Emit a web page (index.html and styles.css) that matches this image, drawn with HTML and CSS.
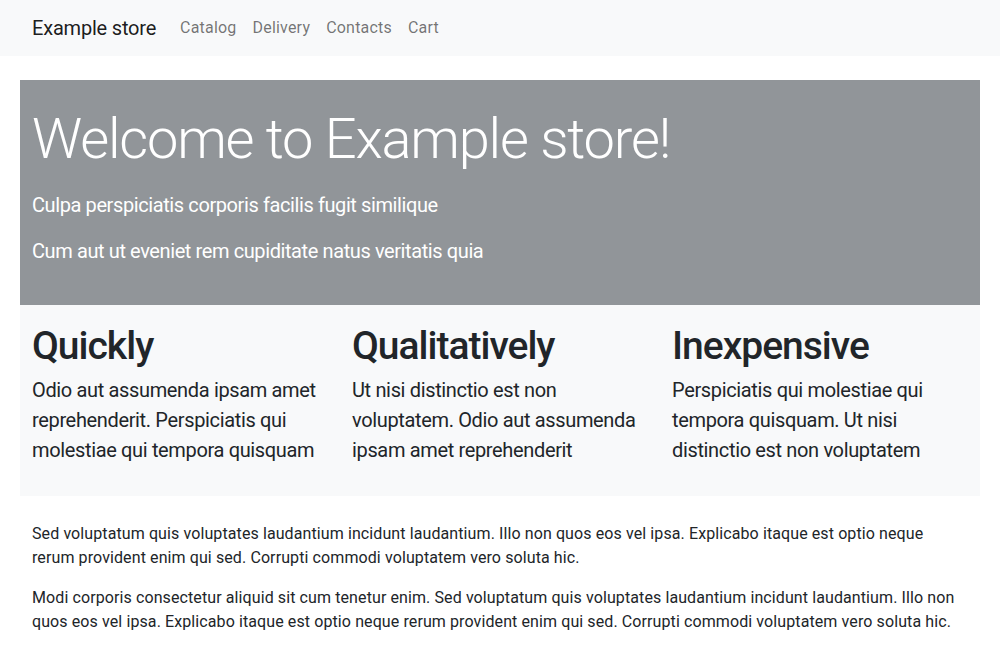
FILE: index.html
```html
<!DOCTYPE html>
<html lang="en">
<head>
<meta charset="utf-8">
<title>Example store</title>
<link rel="stylesheet" href="styles.css">
</head>
<body>
<nav class="navbar">
  <div class="container nav-inner">
    <a class="brand" href="#">Example store</a>
    <ul class="nav-links">
      <li><a href="#">Catalog</a></li>
      <li><a href="#">Delivery</a></li>
      <li><a href="#">Contacts</a></li>
      <li><a href="#">Cart</a></li>
    </ul>
  </div>
</nav>
<main class="container main">
  <section class="hero">
    <h1 class="hero-title">Welcome to Example store!</h1>
    <p class="hero-lead">Culpa perspiciatis corporis facilis fugit similique</p>
    <p class="hero-lead">Cum aut ut eveniet rem cupiditate natus veritatis quia</p>
  </section>
  <section class="features">
    <div class="feature">
      <h2>Quickly</h2>
      <p>Odio aut assumenda ipsam amet reprehenderit. Perspiciatis qui molestiae qui tempora quisquam</p>
    </div>
    <div class="feature">
      <h2>Qualitatively</h2>
      <p>Ut nisi distinctio est non voluptatem. Odio aut assumenda ipsam amet reprehenderit</p>
    </div>
    <div class="feature">
      <h2>Inexpensive</h2>
      <p>Perspiciatis qui molestiae qui tempora quisquam. Ut nisi distinctio est non voluptatem</p>
    </div>
  </section>
  <section class="body-text">
    <p>Sed voluptatum quis voluptates laudantium incidunt laudantium. Illo non quos eos vel ipsa. Explicabo itaque est optio neque rerum provident enim qui sed. Corrupti commodi voluptatem vero soluta hic.</p>
    <p>Modi corporis consectetur aliquid sit cum tenetur enim. Sed voluptatum quis voluptates laudantium incidunt laudantium. Illo non quos eos vel ipsa. Explicabo itaque est optio neque rerum provident enim qui sed. Corrupti commodi voluptatem vero soluta hic.</p>
  </section>
</main>
</body>
</html>
```
FILE: styles.css
```css
* { box-sizing: border-box; }
body {
  margin: 0;
  font-family: Roboto, "Noto Sans", sans-serif;
  font-size: 16px;
  line-height: 1.5;
  color: #212529;
  background: #fff;
}
.container {
  width: 960px;
  margin: 0 auto;
  padding: 0 12px;
}
.navbar {
  background: #f8f9fa;
  padding: 8px 0;
}
.nav-inner {
  display: flex;
  align-items: center;
}
.brand {
  font-size: 20px;
  line-height: 30px;
  padding: 5px 0;
  margin-right: 16px;
  letter-spacing: -0.2px;
  color: rgba(0,0,0,.9);
  text-decoration: none;
}
.nav-links {
  display: flex;
  list-style: none;
  margin: 0;
  padding: 0;
}
.nav-links a {
  display: block;
  padding: 8px;
  letter-spacing: 0.2px;
  color: rgba(0,0,0,.55);
  text-decoration: none;
}
.main { margin-top: 24px; }
.hero {
  background: #919599;
  color: #fff;
  padding: 26px 12px 23px;
  margin: 0 -12px;
}
.hero-title {
  font-size: 56px;
  font-weight: 300;
  line-height: 1.2;
  letter-spacing: -1.2px;
  margin: 0 0 17px;
}
.hero-lead {
  font-size: 20px;
  font-weight: 400;
  line-height: 30px;
  letter-spacing: -0.4px;
  margin: 0 0 16px;
}
.features {
  background: #f8f9fa;
  margin: 0 -12px;
  padding: 18px 0 15px;
  display: grid;
  grid-template-columns: repeat(3, 1fr);
}
.feature { padding: 0 12px; }
.feature h2 {
  font-size: 39px;
  font-weight: 500;
  line-height: 1.2;
  letter-spacing: -1px;
  margin: 0 0 5px;
}
.feature p {
  font-size: 20px;
  line-height: 30px;
  letter-spacing: -0.35px;
  margin: 0 0 16px;
}
.body-text { margin-top: 26px; }
.body-text p {
  margin: 0 0 16px;
  letter-spacing: 0.1px;
}
```
